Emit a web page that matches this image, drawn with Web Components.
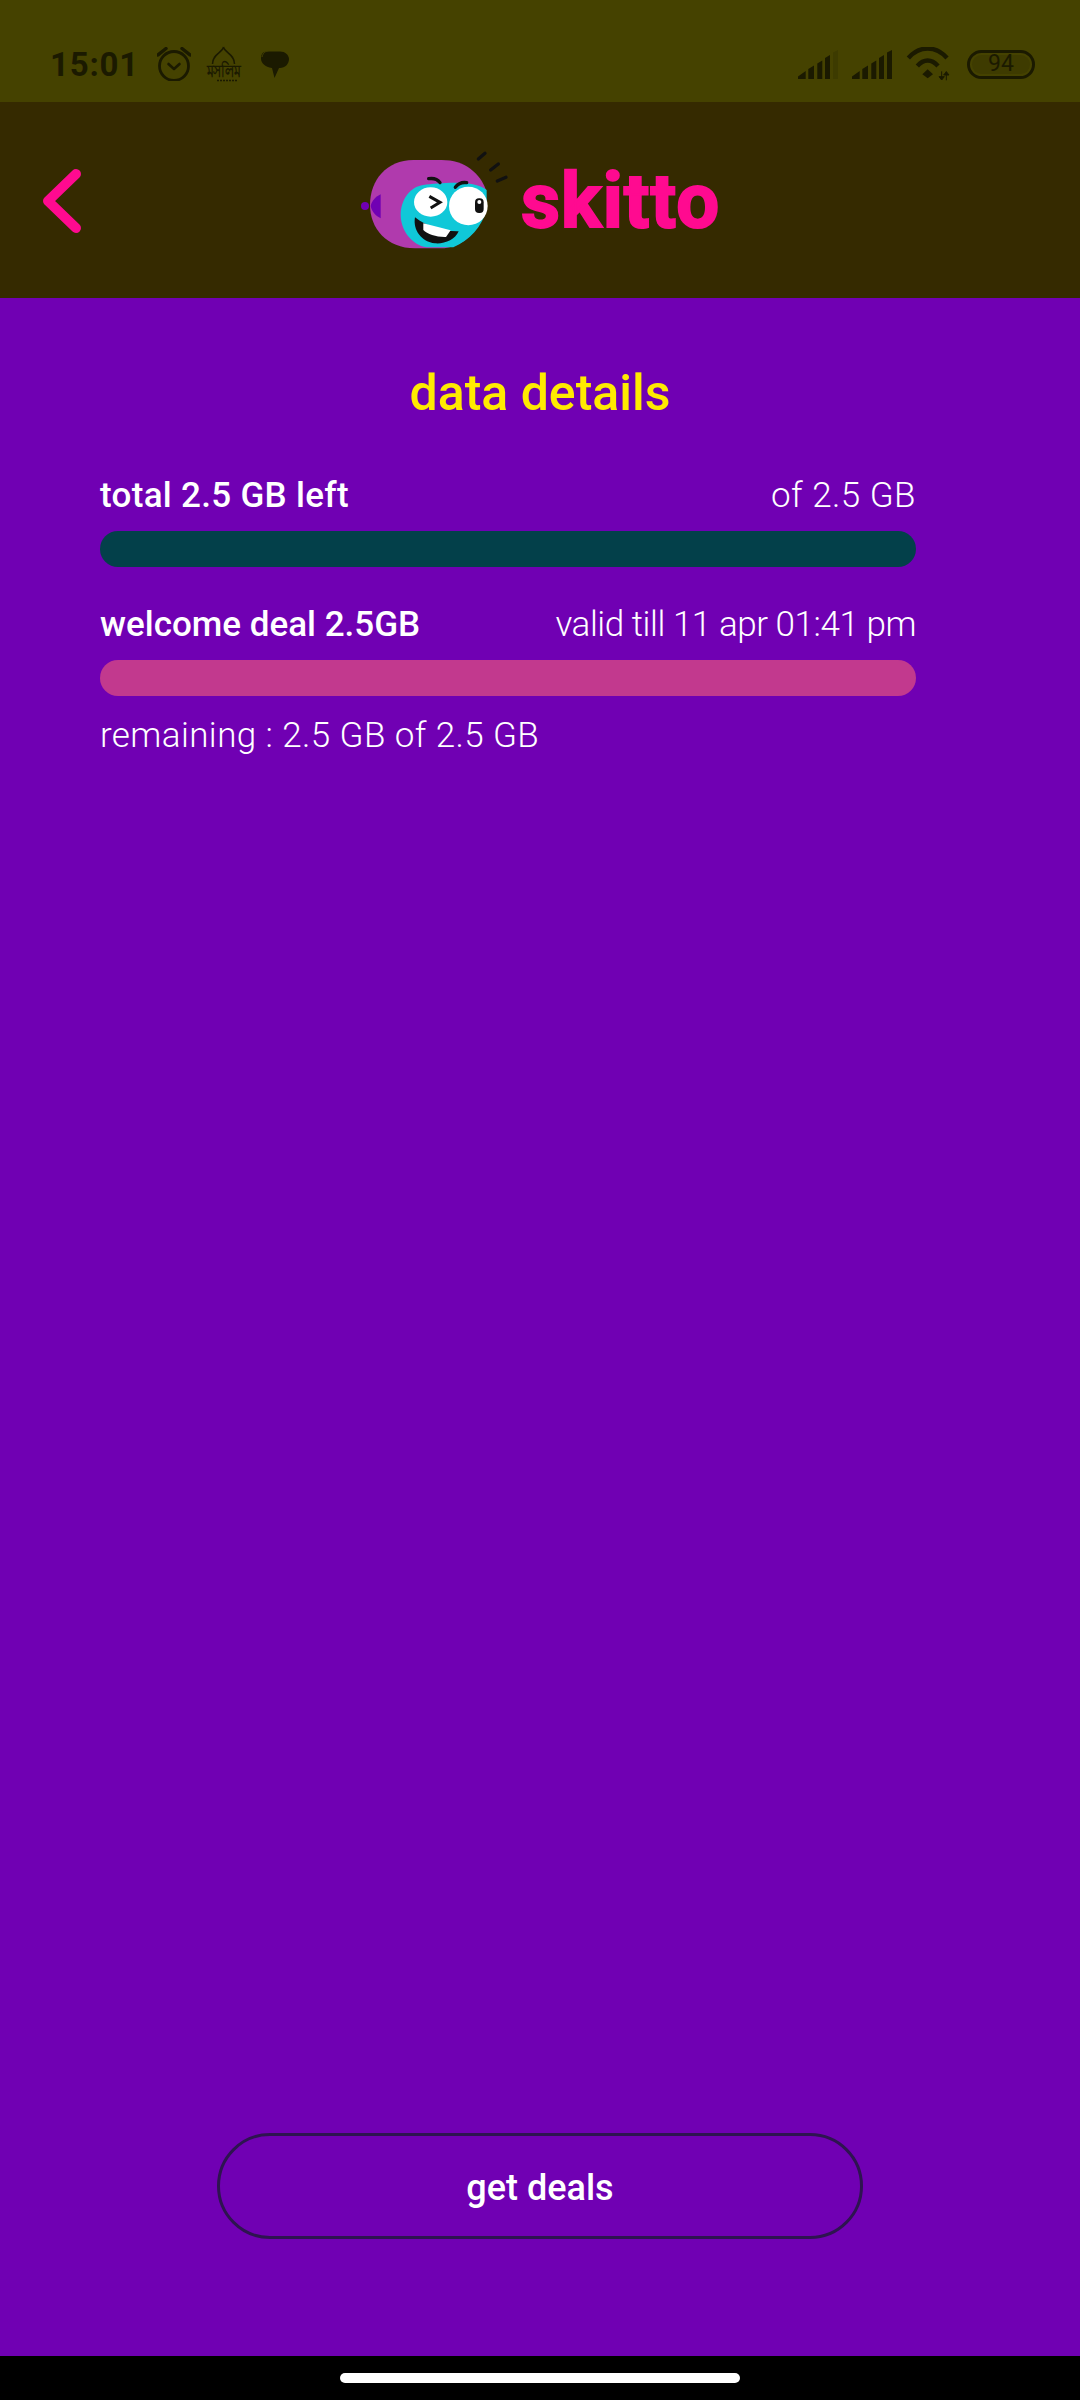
<!DOCTYPE html>
<html>
<head>
<meta charset="utf-8">
<style>
    html, body { margin: 0; padding: 0; }
    body { font-family: Roboto, "Noto Sans", sans-serif; background: #7000b3; }
</style>
</head>
<body>
<skitto-screen>
    <status-bar slot="status" time="15:01" battery="94"></status-bar>
    <app-bar slot="top"></app-bar>
    <page-title>data details</page-title>
    <data-meter color="#03404a" detail="of 2.5 GB" label-track="0.3px" detail-track="0.45px">total 2.5 GB left</data-meter>
    <data-meter color="#c2398e" detail="valid till 11 apr 01:41 pm" detail-track="-0.45px" note="remaining : 2.5 GB of 2.5 GB">welcome deal 2.5GB</data-meter>
    <deal-button slot="action">get deals</deal-button>
    <home-indicator slot="nav"></home-indicator>
</skitto-screen>

<script>
class SkittoScreen extends HTMLElement {
    constructor() {
        super();
        this.attachShadow({ mode: 'open' });
        this.shadowRoot.innerHTML = `
            <style>
                :host { display: flex; flex-direction: column; width: 1080px; height: 2400px; overflow: hidden; }
                main { flex: 1; display: flex; flex-direction: column; background: #7000b3; padding-top: 65px; }
                .action { margin-top: auto; margin-bottom: 117px; display: flex; justify-content: center; }
            </style>
            <slot name="status"></slot>
            <slot name="top"></slot>
            <main>
                <slot></slot>
                <div class="action"><slot name="action"></slot></div>
            </main>
            <slot name="nav"></slot>
        `;
    }
}

class StatusBar extends HTMLElement {
    constructor() {
        super();
        this.attachShadow({ mode: 'open' });
    }

    connectedCallback() {
        const time = this.getAttribute('time');
        const battery = this.getAttribute('battery');
        const signal = (last) => `
            <svg width="40" height="29" viewBox="0 0 40 29">
                <path d="M0 26.500 7.700 21V29H0Z"/>
                <path d="M10.300 19 16 15.500V29H10.300Z"/>
                <path d="M19.300 13.500 24.300 10.500V29H19.300Z"/>
                <path d="M27 8 32 5V29H27Z"/>
                <path d="M35 2.500 40 0V29H35Z" fill-opacity="${last}"/>
            </svg>`;
        this.shadowRoot.innerHTML = `
            <style>
                :host { display: flex; align-items: center; height: 102px; background: #454200; color: #1b1a00; padding: 26px 45px 0 50px; box-sizing: border-box; font-family: Roboto, sans-serif; }
                svg { display: block; fill: #1b1a00; flex: none; }
                .time { font-size: 33px; font-weight: 700; letter-spacing: 0.8px; margin-right: 18px; }
                .mosque { margin-left: 15px; overflow: visible; }
                .chat { margin-left: 19px; }
                .right { margin-left: auto; display: flex; align-items: center; }
                .right svg + svg { margin-left: 14px; }
                .battery { margin-left: 16px; box-sizing: border-box; width: 68px; height: 29px; border: 3.500px solid #1b1a00; border-radius: 15px; padding: 2px; }
                .battery div { height: 100%; border-radius: 10px; background: #3e3b00; font-size: 23px; line-height: 18px; text-align: center; }
            </style>
            <span class="time">${time}</span>
            <svg width="34" height="34" viewBox="0 0 34 34" style="fill:none;stroke:#1b1a00">
                <circle cx="17" cy="19" r="14.500" stroke-width="2.800"/>
                <path d="M11.500 17 17 22 22.500 17" stroke-width="2.600" stroke-linecap="round" stroke-linejoin="round"/>
                <path d="M1 8 9 1.500M33 8 25 1.500" stroke-width="3.400" stroke-linecap="round"/>
            </svg>
            <svg class="mosque" width="35" height="35" viewBox="0 0 35 35">
                <path d="M17.500 0C16 6 6.500 7 6.500 17M17.500 0C19 6 28.500 7 28.500 17" fill="none" stroke="#1b1a00" stroke-width="1.500"/>
                <text x="0.500" y="30" textLength="34" lengthAdjust="spacingAndGlyphs" font-family="'Noto Sans', sans-serif" font-size="17" font-weight="700">মসলিম</text>
                <path d="M11 33.500H31" fill="none" stroke="#1b1a00" stroke-width="1.500" stroke-dasharray="2 1"/>
            </svg>
            <svg class="chat" width="29" height="29" viewBox="0 0 29 29">
                <path d="M7 1.500H20C25 1.500 29 5 29 9C29 14 25 18 20 18H19L14.500 28 12 18C5 17 1 13 1 8.500C1 4 3 1.500 7 1.500Z"/>
                <path d="M2 7C3 3 5 1 10 0.500" fill="none" stroke="#454200" stroke-width="1"/>
            </svg>
            <div class="right">
                ${signal(0.18)}
                ${signal(1)}
                <svg width="45" height="35" viewBox="415 55 135 105" style="fill:none;stroke:#1b1a00">
                    <path d="M422 88C455 50 505 50 538 88M449 112C468 90 492 90 511 112" stroke-width="13"/>
                    <path d="M480 122 496 137 480 149 464 137Z" fill="#1b1a00" stroke="none"/>
                    <path d="M522 128V154M522 154 514 144H530ZM536 155V129M536 129 528 139H544Z" fill="#1b1a00" stroke="#1b1a00" stroke-width="3"/>
                </svg>
                <div class="battery"><div>${battery}</div></div>
            </div>
        `;
    }
}

class AppBar extends HTMLElement {
    constructor() {
        super();
        this.attachShadow({ mode: 'open' });
        this.shadowRoot.innerHTML = `
            <style>
                :host { display: flex; align-items: center; height: 196px; background: #352a00; position: relative; }
                .back { position: absolute; left: 43px; top: 67px; }
                .logo { display: flex; align-items: center; margin-left: 360px; }
                .name { font-family: Roboto, sans-serif; font-weight: 700; font-size: 76px; letter-spacing: 1px; line-height: 100px; color: #ff0a90; -webkit-text-stroke: 2px #ff0a90; margin-left: 11px; position: relative; top: 1px; }
            </style>
            <svg class="back" width="38" height="64" viewBox="0 0 38 64">
                <path d="M33 5 5 32 33 59" fill="none" stroke="#ff0a90" stroke-width="10" stroke-linecap="round" stroke-linejoin="round"/>
            </svg>
            <div class="logo">
                <svg width="150" height="100" viewBox="60 60 450 300">
                    <path fill="#b03aad" d="M220 90H305C375 90 420 130 438 180V230C420 300 370 355 300 355H225C140 355 90 295 90 225C90 150 140 90 220 90Z"/>
                    <path fill="#7000b3" d="M122 193V265C108 258 95 245 92 228C95 212 108 200 122 193Z"/>
                    <circle cx="75" cy="228" r="12" fill="#7000b3"/>
                    <path fill="#10c8d8" d="M250 165C300 160 400 148 440 180V240C425 290 390 330 340 352H260C215 345 182 300 182 255C182 210 210 170 250 165Z"/>
                    <ellipse cx="272" cy="216" rx="50" ry="44" fill="#fff"/>
                    <path d="M268 199 300 217 272 234" fill="none" stroke="#111" stroke-width="9" stroke-linejoin="miter"/>
                    <circle cx="385" cy="228" r="58" fill="#fff"/>
                    <rect x="405" y="205" width="26" height="44" rx="12" fill="#111"/>
                    <circle cx="418" cy="216" r="6" fill="#fff"/>
                    <path d="M266 146C280 144 293 148 300 158M346 172C355 160 367 156 380 158" fill="none" stroke="#111" stroke-width="10" stroke-linecap="round"/>
                    <path fill="#111" d="M225 262C260 290 310 305 356 304C345 330 315 342 285 340C245 336 218 300 225 262Z"/>
                    <path fill="#fff" d="M250 280 332 301 318 321C290 322 262 312 250 300Z"/>
                    <path d="M415 87 435 70M452 120 475 102M472 153 498 142" stroke="#111" stroke-width="10" stroke-linecap="round"/>
                </svg>
                <span class="name">skitto</span>
            </div>
        `;
    }
}

class PageTitle extends HTMLElement {
    constructor() {
        super();
        this.attachShadow({ mode: 'open' });
        this.shadowRoot.innerHTML = `
            <style>
                :host { display: block; text-align: center; font-family: Roboto, sans-serif; font-weight: 500; font-size: 50px; line-height: 60px; color: #ffea00; margin-bottom: 50px; }
            </style>
            <slot></slot>
        `;
    }
}

class DataMeter extends HTMLElement {
    constructor() {
        super();
        this.attachShadow({ mode: 'open' });
    }

    connectedCallback() {
        const note = this.getAttribute('note');
        this.shadowRoot.innerHTML = `
            <style>
                :host { display: block; margin: 0 164px 35px 100px; font-family: Roboto, sans-serif; font-size: 35px; line-height: 46px; color: #fff; }
                .row { display: flex; justify-content: space-between; }
                .label { font-weight: 500; letter-spacing: ${this.getAttribute('label-track') || 0}; }
                .detail, .note { font-weight: 300; }
                .detail { letter-spacing: ${this.getAttribute('detail-track') || 0}; }
                .bar { height: 36px; border-radius: 18px; margin-top: 12px; background: ${this.getAttribute('color')}; }
                .note { margin-top: 17px; letter-spacing: 0.4px; }
            </style>
            <div class="row">
                <span class="label"><slot></slot></span>
                <span class="detail">${this.getAttribute('detail')}</span>
            </div>
            <div class="bar"></div>
            ${note ? `<div class="note">${note}</div>` : ''}
        `;
    }
}

class DealButton extends HTMLElement {
    constructor() {
        super();
        this.attachShadow({ mode: 'open' });
        this.shadowRoot.innerHTML = `
            <style>
                :host { display: flex; align-items: center; justify-content: center; box-sizing: border-box; width: 646px; height: 106px; border: 3px solid #2e1450; border-radius: 53px; font-family: Roboto, sans-serif; font-weight: 500; font-size: 36px; color: #fff; padding-top: 4px; }
            </style>
            <slot></slot>
        `;
    }
}

class HomeIndicator extends HTMLElement {
    constructor() {
        super();
        this.attachShadow({ mode: 'open' });
        this.shadowRoot.innerHTML = `
            <style>
                :host { display: flex; justify-content: center; height: 44px; background: #000; padding-top: 17px; box-sizing: border-box; }
                div { width: 400px; height: 10px; border-radius: 5px; background: #fff; }
            </style>
            <div></div>
        `;
    }
}

customElements.define('skitto-screen', SkittoScreen);
customElements.define('status-bar', StatusBar);
customElements.define('app-bar', AppBar);
customElements.define('page-title', PageTitle);
customElements.define('data-meter', DataMeter);
customElements.define('deal-button', DealButton);
customElements.define('home-indicator', HomeIndicator);
</script>
</body>
</html>
